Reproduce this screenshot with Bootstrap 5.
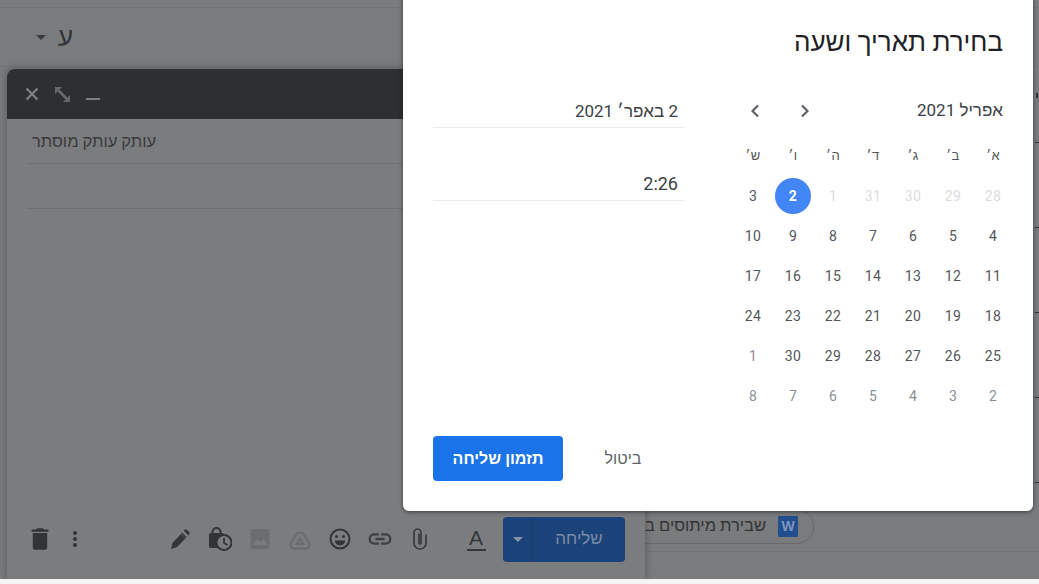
<!DOCTYPE html>
<html lang="he" dir="rtl">
<head>
  <meta charset="UTF-8" />
  <title>בחירת תאריך ושעה</title>
  <link href="https://cdn.jsdelivr.net/npm/bootstrap@5.3.0/dist/css/bootstrap.min.css" rel="stylesheet">
  <style>
    html, body { height: 584px; overflow: hidden; }
    body { background: #f4f4f4; font-family: Roboto, "Liberation Sans", sans-serif; color: #3c4043; }
    .stage { position: relative; height: 579px; background: #7a7b7d; overflow: hidden; }

    .top-rule { height: 8px; border-bottom: 1px solid #737476; }
    .sender-row { height: 59px; padding-left: 36px; color: #333436; font-size: 26px; border-bottom: 1px solid #737476; }
    .caret-down { width: 0; height: 0; border-left: 5px solid transparent; border-right: 5px solid transparent; border-top: 5px solid #3b3c3e; }
    .sender-row .caret-down { margin-right: 12px; }

    .side-ticks { position: absolute; top: 0; right: 0; width: 4px; height: 100%; }
    .side-ticks i { position: absolute; right: 0; width: 4px; height: 1px; background: #333; }
    .side-ticks i.dot { width: 2px; height: 5px; right: 1px; }

    .compose-win { position: absolute; left: 7px; top: 69px; width: 638px; height: 510px; background: #7b7c7e; border-radius: 8px 8px 0 0; box-shadow: 0 0 8px rgba(0,0,0,.3); }
    .compose-head { height: 50px; background: #2e2f31; border-radius: 8px 8px 0 0; padding: 0 18px; }
    .compose-line { margin-left: 20px; border-bottom: 1px solid #707173; }
    .compose-to { height: 45px; line-height: 46px; color: #3a3b3d; font-size: 16.5px; padding-left: 5px; }
    .compose-subject { height: 45px; }
    .compose-foot { height: 46px; margin-top: auto; margin-bottom: 17px; padding-left: 21px; }
    .tool-icon { display: block; flex: none; width: 24px; height: 24px; }
    .gap-after-trash { margin-right: 11px; }
    .gap-after-dots { margin-right: 81px; }
    .tool-run { gap: 16px; }
    .format-a { width: 24px; margin-left: 32px; text-align: center; color: #36373a; font: 400 21px/22px "Liberation Sans", sans-serif; }
    .format-a span { display: inline-block; width: 19px; border-bottom: 2px solid #36373a; }
    .send-split { width: 122px; height: 45px; margin-left: 15px; background: #1c4379; border-radius: 4px; color: #7a8ba5; font-size: 17px; font-weight: 500; }
    .send-label { flex: 1; text-align: center; }
    .send-caret { width: 30px; height: 100%; border-right: 1px solid #193c6d; }
    .send-caret .caret-down { border-top-color: #8493a8; }

    .file-chip { position: absolute; left: 640px; top: 509px; width: 174px; height: 35px; border: 1px solid #67686a; border-radius: 0 17px 17px 0; padding-right: 15px; color: #333436; font-size: 16.5px; overflow: hidden; white-space: nowrap; }
    .word-mark { width: 20px; height: 21px; flex: none; background: #224d8f; color: #7f97bf; font: 700 14px/21px "Liberation Sans", sans-serif; text-align: center; border-radius: 1px; }
    .chip-rule { position: absolute; left: 645px; right: 0; top: 551px; border-top: 1px solid #727375; }

    .schedule-modal { position: absolute; left: 403px; top: -8px; width: 630px; height: 519px; background: #fff; border-radius: 6px; box-shadow: 0 1px 4px rgba(0,0,0,.5); padding: 30px; }
    .schedule-title { font-size: 26px; font-weight: 400; line-height: 40px; margin: 0; color: #202124; height: 69px; }
    .picker-cols { height: 345px; }
    .cal-col { width: 280px; margin-right: -10px; }
    .cal-head { height: 40px; padding: 0 10px; }
    .cal-month { font-size: 17px; color: #3c4043; }
    .cal-nav { gap: 26px; }
    .cal-nav svg { display: block; width: 24px; height: 24px; }
    .cal-grid { display: grid; grid-template-columns: repeat(7, 40px); grid-auto-rows: 40px; margin-top: 5px; }
    .cal-grid > div { display: flex; align-items: center; justify-content: center; font-size: 14px; letter-spacing: .3px; color: #54575a; }
    .cal-grid > .dow { font-size: 13px; }
    .cal-grid > .faded { color: #dadce0; }
    .cal-grid > .other { color: #8b9095; }
    .cal-grid > .picked span { width: 36px; height: 36px; line-height: 36px; text-align: center; border-radius: 50%; background: #4285f4; color: #fff; font-weight: 700; }
    .time-col { width: 251px; margin-right: 49px; padding-top: 4px; }
    .time-field { height: 33px; border-bottom: 1px solid #e8eaed; font-size: 18px; line-height: 32px; padding: 0 6px; color: #3c4043; margin-bottom: 40px; }
    .date-text { font-size: 17px; }
    .schedule-actions { gap: 20px; }
    .btn-schedule { width: 130px; height: 45px; background: #1a73e8; border: 0; border-radius: 4px; color: #fff; font-size: 16px; font-weight: 700; padding: 0; }
    .btn-schedule:hover { background: #1a73e8; color: #fff; }
    .btn-dismiss { width: 80px; height: 45px; border: 0; color: #5f6368; font-size: 16px; padding: 0; }
  </style>
</head>
<body>
  <div class="stage">
    <div class="top-rule"></div>
    <div class="sender-row d-flex align-items-center" dir="ltr">
      <span class="caret-down"></span>
      <span dir="rtl">ע</span>
    </div>

    <div class="side-ticks">
      <i class="dot" style="top:93px"></i><i style="top:142px"></i><i style="top:227px"></i><i style="top:312px"></i><i style="top:397px"></i><i style="top:482px"></i>
    </div>

    <div class="file-chip d-flex align-items-center gap-2">
      <span class="word-mark ms-1">W</span>
      <span>שבירת מיתוסים ב</span>
    </div>
    <div class="chip-rule"></div>

    <div class="compose-win d-flex flex-column" dir="ltr">
      <div class="compose-head d-flex align-items-center gap-3">
        <svg width="14" height="14" viewBox="0 0 14 14" stroke="#7d7e81" stroke-width="2.400" fill="none"><path d="M1.500 1.500l11 11M12.500 1.500l-11 11"/></svg>
        <svg width="15" height="15" viewBox="0 0 15 15" fill="#66676a"><path d="M0 0h7L0 7zM15 15H8l7-7z"/><path d="M3 3l9 9" stroke="#66676a" stroke-width="2.600"/></svg>
        <svg width="14" height="14" viewBox="0 0 14 14" fill="#7d7e81"><rect y="11" width="14" height="2"/></svg>
      </div>
      <div class="compose-line compose-to" dir="ltr"><span dir="rtl">עותק עותק מוסתר</span></div>
      <div class="compose-line compose-subject"></div>

      <div class="compose-foot d-flex align-items-center">
        <!-- trash -->
        <svg class="tool-icon gap-after-trash" viewBox="2 2 20 20" fill="#333436"><path d="M6 19c0 1.100.9 2 2 2h8c1.100 0 2-.9 2-2V7H6v12zM19 4h-3.500l-1-1h-5l-1 1H5v2h14V4z"/></svg>
        <!-- more -->
        <svg class="tool-icon gap-after-dots" viewBox="0 0 24 24" fill="#333436"><path d="M12 8c1.100 0 2-.9 2-2s-.9-2-2-2-2 .9-2 2 .9 2 2 2zm0 2c-1.100 0-2 .9-2 2s.9 2 2 2 2-.9 2-2-.9-2-2-2zm0 6c-1.100 0-2 .9-2 2s.9 2 2 2 2-.9 2-2-.9-2-2-2z"/></svg>
        <div class="d-flex align-items-center tool-run">
          <!-- signature pen -->
          <svg class="tool-icon" viewBox="0 0 24 24" fill="#333436"><path d="M3 22l1.500-6L13 7l4.500 4.500-8.500 8.500z"/><path d="M15.500 3.500l2.500-1.500 4 4-1.500 2.500z"/><path d="M14 5.500l4.500 4.500-1 1-4.500-4.500z"/></svg>
          <!-- confidential -->
          <svg class="tool-icon" viewBox="0 0 24 24"><rect x="1" y="6" width="15" height="15" rx="2" fill="#333436"/><path d="M4.500 7V5a4 4 0 0 1 8 0v2" fill="none" stroke="#333436" stroke-width="2"/><circle cx="16" cy="15.500" r="7.500" fill="#7b7c7e" stroke="#333436" stroke-width="2"/><path d="M16 11v5l3.500 2" fill="none" stroke="#333436" stroke-width="1.800"/></svg>
          <!-- photo -->
          <svg class="tool-icon" viewBox="0 0 24 24"><rect x="2.500" y="2" width="19" height="20" rx="1.500" fill="#6c6d6f"/><path d="M5 18l4.500-6 3 3.500 3-4 4 6.500z" fill="#7a7b7d"/></svg>
          <!-- drive -->
          <svg class="tool-icon" viewBox="0 0 24 24" fill="none" stroke="#6a6b6d" stroke-width="1.800" stroke-linejoin="round"><path d="M9 6h6l7 11.500-2.500 4h-15L2 17.500z"/><path d="M12 11.500l3.200 5.500H8.800z"/></svg>
          <!-- emoji -->
          <svg class="tool-icon" viewBox="0 0 24 24"><circle cx="12" cy="12" r="9.500" fill="none" stroke="#333436" stroke-width="2"/><circle cx="8.500" cy="9.500" r="1.500" fill="#333436"/><circle cx="15.500" cy="9.500" r="1.500" fill="#333436"/><path d="M6.800 13.500h10.400a5.200 5 0 0 1-10.400 0z" fill="#333436"/></svg>
          <!-- link -->
          <svg class="tool-icon" viewBox="1.500 1.500 21 21" fill="#3f4042"><path d="M3.900 12c0-1.710 1.390-3.100 3.100-3.100h4V7H7c-2.760 0-5 2.240-5 5s2.240 5 5 5h4v-1.900H7c-1.710 0-3.100-1.390-3.100-3.100zM8 13h8v-2H8v2zm9-6h-4v1.900h4c1.710 0 3.100 1.390 3.100 3.100s-1.390 3.100-3.100 3.100h-4V17h4c2.760 0 5-2.240 5-5s-2.240-5-5-5z"/></svg>
          <!-- attach -->
          <svg class="tool-icon" viewBox="0 0 24 24" fill="none" stroke="#3a3b3d" stroke-width="1.700" stroke-linecap="round"><path d="M18 8v8a6 6 0 0 1-12 0V5.500a3.500 3.500 0 0 1 7 0V16a1 1 0 0 1-2 0V7"/></svg>
        </div>
        <div class="format-a"><span>A</span></div>
        <div class="send-split d-flex align-items-center">
          <div class="send-caret d-flex align-items-center justify-content-center"><span class="caret-down"></span></div>
          <div class="send-label" dir="rtl">שליחה</div>
        </div>
      </div>
    </div>

    <div class="schedule-modal">
      <h2 class="schedule-title">בחירת תאריך ושעה</h2>
      <div class="picker-cols d-flex">
        <div class="cal-col">
          <div class="cal-head d-flex justify-content-between align-items-center">
            <span class="cal-month">אפריל 2021</span>
            <div class="cal-nav d-flex" dir="ltr">
              <svg viewBox="0 0 24 24" fill="none" stroke="#5f6368" stroke-width="2.200"><path d="M15 6.500l-5.500 5.500 5.500 5.500"/></svg>
              <svg viewBox="0 0 24 24" fill="none" stroke="#5f6368" stroke-width="2.200"><path d="M9 6.500l5.500 5.500-5.500 5.500"/></svg>
            </div>
          </div>
          <div class="cal-grid">
            <div class="dow">א׳</div><div class="dow">ב׳</div><div class="dow">ג׳</div><div class="dow">ד׳</div><div class="dow">ה׳</div><div class="dow">ו׳</div><div class="dow">ש׳</div>
            <div class="faded">28</div><div class="faded">29</div><div class="faded">30</div><div class="faded">31</div><div class="faded">1</div><div class="picked"><span>2</span></div><div>3</div>
            <div>4</div><div>5</div><div>6</div><div>7</div><div>8</div><div>9</div><div>10</div>
            <div>11</div><div>12</div><div>13</div><div>14</div><div>15</div><div>16</div><div>17</div>
            <div>18</div><div>19</div><div>20</div><div>21</div><div>22</div><div>23</div><div>24</div>
            <div>25</div><div>26</div><div>27</div><div>28</div><div>29</div><div>30</div><div class="other">1</div>
            <div class="other">2</div><div class="other">3</div><div class="other">4</div><div class="other">5</div><div class="other">6</div><div class="other">7</div><div class="other">8</div>
          </div>
        </div>
        <div class="time-col">
          <div class="time-field date-text">2 באפר׳ 2021</div>
          <div class="time-field">2:26</div>
        </div>
      </div>
      <div class="schedule-actions d-flex justify-content-end">
        <button class="btn btn-dismiss" type="button">ביטול</button>
        <button class="btn btn-schedule" type="button">תזמון שליחה</button>
      </div>
    </div>
  </div>
  <script src="https://cdn.jsdelivr.net/npm/bootstrap@5.3.0/dist/js/bootstrap.bundle.min.js"></script>
</body>
</html>
